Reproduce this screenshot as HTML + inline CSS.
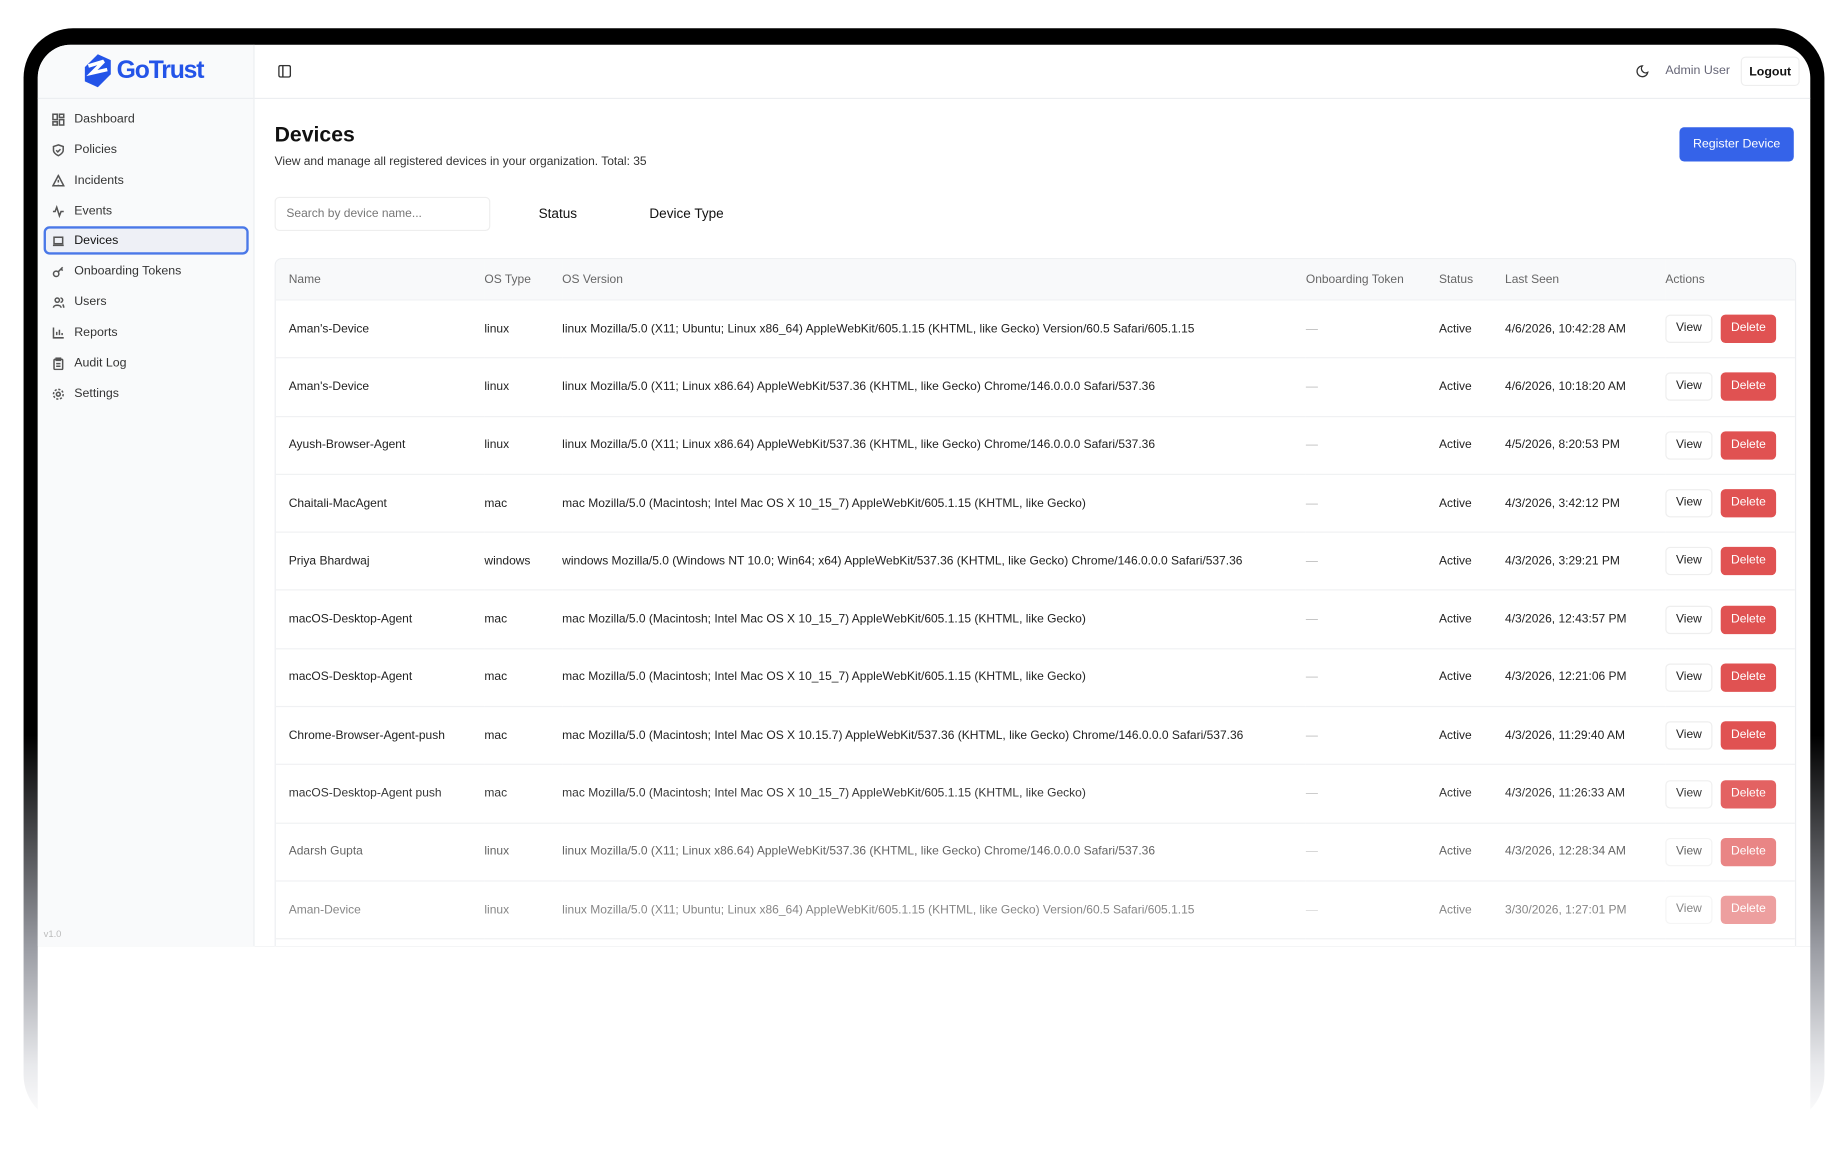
<!DOCTYPE html>
<html><head><meta charset="utf-8"><style>
html,body{margin:0;padding:0;width:1848px;height:1171px;overflow:hidden;background:#fff;font-family:"Liberation Sans",Arial,sans-serif}
#w{position:absolute;left:0;top:0;width:1568px;height:994px;transform:scale(1.17857);transform-origin:0 0}
.frame{position:absolute;left:20px;top:24px;width:1528px;height:930px;border-radius:42px;background:linear-gradient(#000 0,#000 600px,#9a9ca3 780px,#e8e9ec 880px,#fff 930px)}
.screen{position:absolute;left:32px;top:38px;width:1504px;height:765px;border-radius:28px 28px 0 0;background:#fff;overflow:hidden}
.below{position:absolute;left:32px;top:803px;width:1504px;height:191px;background:#fff}
.side{position:absolute;left:0;top:0;width:183px;height:765px;background:#f9fafb;border-right:1px solid #eceef1}
.logo{position:absolute;left:38px;top:5px;height:34px;display:flex;align-items:center;gap:3px;color:#2454e8;font-weight:bold;font-size:21px;letter-spacing:-1px}
.side .hr{position:absolute;left:0;right:0;top:45px;border-top:1px solid #eceef1}
.nav{position:absolute;left:5px;width:174px;height:24px;font-size:10.5px;color:#333;display:flex;align-items:center;box-sizing:border-box;padding-left:7px}
.nav svg{width:11px;height:11px;margin-right:8px;stroke:#555;fill:none;stroke-width:1.4}
.nav.act{border:2px solid #4a78e8;border-radius:5px;background:#eef0f6;padding-left:5px;color:#111}
.hdr{position:absolute;left:184px;right:0;top:0;height:45px;border-bottom:1px solid #eceef1}
.main{position:absolute;left:184px;top:46px;right:0;bottom:0}
table{border-collapse:collapse;width:1289px;font-size:10.2px}
th{font-weight:normal;color:#666;text-align:left;height:34px;background:#f8f9fa;padding:0}
td{height:48.3px;padding:0;color:#222;border-top:1px solid #f0f1f3;white-space:nowrap}
.btnv{display:inline-block;width:40px;height:24px;border:1px solid #eee;border-radius:4px;text-align:center;line-height:22px;color:#222;box-sizing:border-box;margin-right:7px;background:#fff}
.btnd{display:inline-block;width:47px;height:24px;border-radius:4px;text-align:center;line-height:24px;color:#fff;background:#e05252}
</style></head><body><div id="w">
<div class="frame"></div>
<div class="screen">
 <div class="side">
  <div class="logo"><svg width="26" height="30" viewBox="0 0 26 30"><path d="M13 1 L24 6 L24 18 L13 29 L2 24 L2 12 Z" fill="#2454e8"/><path d="M5 11 L18 7 L8 17 L21 14" stroke="#fff" stroke-width="3" fill="none"/></svg><span>GoTrust</span></div>
  <div class="hr"></div>
  <div class="nav" style="top:51px"><svg viewBox="0 0 12 12"><rect x="1" y="1" width="4" height="5"/><rect x="7" y="1" width="4" height="3"/><rect x="1" y="8" width="4" height="3"/><rect x="7" y="6" width="4" height="5"/></svg>Dashboard</div>
  <div class="nav" style="top:77px"><svg viewBox="0 0 12 12"><path d="M6 1 L10.5 2.5 V6 C10.5 9 6 11 6 11 C6 11 1.5 9 1.5 6 V2.5Z"/><path d="M4 6 L5.5 7.5 L8 5"/></svg>Policies</div>
  <div class="nav" style="top:103px"><svg viewBox="0 0 12 12"><path d="M6 1 L11 10.5 H1Z"/><path d="M6 5V7.5M6 9V9.2"/></svg>Incidents</div>
  <div class="nav" style="top:129px"><svg viewBox="0 0 12 12"><path d="M1 6H3L4.5 2L7 10L8.5 6H11"/></svg>Events</div>
  <div class="nav act" style="top:154px"><svg viewBox="0 0 12 12"><rect x="2" y="2.5" width="8" height="6"/><path d="M1 10H11"/></svg>Devices</div>
  <div class="nav" style="top:180px"><svg viewBox="0 0 12 12"><circle cx="4" cy="8" r="2.5"/><path d="M6 6L10 2M8.5 3.5L10 5"/></svg>Onboarding Tokens</div>
  <div class="nav" style="top:206px"><svg viewBox="0 0 12 12"><circle cx="5" cy="4" r="2"/><path d="M1.5 11C1.5 8 8.5 8 8.5 11M8 2A2 2 0 0 1 8 6M10 8C11 9 11 10 11 11"/></svg>Users</div>
  <div class="nav" style="top:232px"><svg viewBox="0 0 12 12"><path d="M1.5 1V10.5H11M4.5 8V5M7 8V3M9.5 8V6"/></svg>Reports</div>
  <div class="nav" style="top:258px"><svg viewBox="0 0 12 12"><rect x="2" y="2" width="8" height="9.5" rx="1"/><rect x="4" y="1" width="4" height="2"/><path d="M4 6H8M4 8.5H8"/></svg>Audit Log</div>
  <div class="nav" style="top:284px"><svg viewBox="0 0 12 12"><circle cx="6" cy="6" r="1.8"/><circle cx="6" cy="6" r="4.5" stroke-dasharray="2 1.5"/></svg>Settings</div>
  <div style="position:absolute;left:5px;top:750px;font-size:8px;color:#bbb">v1.0</div>
 </div>
 <div class="hdr">
  <svg style="position:absolute;left:20px;top:17px" width="11" height="11" viewBox="0 0 11 11" fill="none" stroke="#333" stroke-width="1.2"><rect x="0.6" y="0.6" width="9.8" height="9.8" rx="1.5"/><path d="M4 1V10"/></svg>
  <svg style="position:absolute;left:1172px;top:17px" width="11" height="11" viewBox="0 0 12 12" fill="none" stroke="#333" stroke-width="1.2"><path d="M6 1A5 5 0 1 0 11 7A4 4 0 0 1 6 1Z"/></svg>
  <div style="position:absolute;left:1197px;top:16px;font-size:10.5px;color:#667">Admin User</div>
  <div style="position:absolute;left:1261px;top:10px;width:50px;height:25px;border:1px solid #eee;border-radius:4px;font-size:10.5px;line-height:25px;text-align:center;box-sizing:border-box;color:#111;font-weight:bold">Logout</div>
 </div>
 <div class="main">
  <div style="position:absolute;left:17px;top:20px;font-size:18px;font-weight:bold;color:#111">Devices</div>
  <div style="position:absolute;left:17px;top:48px;font-size:10.2px;color:#333">View and manage all registered devices in your organization. Total: 35</div>
  <div style="position:absolute;left:1209px;top:24px;width:97px;height:29px;background:#3563e9;border-radius:4px;color:#fff;font-size:10.5px;line-height:29px;text-align:center">Register Device</div>
  <div style="position:absolute;left:17px;top:83px;width:183px;height:29px;border:1px solid #eee;border-radius:4px;box-sizing:border-box;font-size:10.2px;color:#777;line-height:27px;padding-left:9px">Search by device name...</div>
  <div style="position:absolute;left:241px;top:92px;font-size:11.5px;color:#111">Status</div>
  <div style="position:absolute;left:335px;top:92px;font-size:11.5px;color:#111">Device Type</div>
  <div style="position:absolute;left:17px;top:135px;border:1px solid #eceef1;border-radius:6px;overflow:hidden">
  <table>
   <colgroup><col style="width:177px"><col style="width:66px"><col style="width:631px"><col style="width:113px"><col style="width:56px"><col style="width:136px"><col></colgroup>
   <tr><th style="padding-left:11px">Name</th><th>OS Type</th><th>OS Version</th><th>Onboarding Token</th><th>Status</th><th>Last Seen</th><th>Actions</th></tr>
   <tr><td style="padding-left:11px">Aman's-Device</td><td>linux</td><td>linux Mozilla/5.0 (X11; Ubuntu; Linux x86_64) AppleWebKit/605.1.15 (KHTML, like Gecko) Version/60.5 Safari/605.1.15</td><td style="color:#bbb">—</td><td>Active</td><td>4/6/2026, 10:42:28 AM</td><td><span class="btnv">View</span><span class="btnd">Delete</span></td></tr>
   <tr><td style="padding-left:11px">Aman's-Device</td><td>linux</td><td>linux Mozilla/5.0 (X11; Linux x86.64) AppleWebKit/537.36 (KHTML, like Gecko) Chrome/146.0.0.0 Safari/537.36</td><td style="color:#bbb">—</td><td>Active</td><td>4/6/2026, 10:18:20 AM</td><td><span class="btnv">View</span><span class="btnd">Delete</span></td></tr>
   <tr><td style="padding-left:11px">Ayush-Browser-Agent</td><td>linux</td><td>linux Mozilla/5.0 (X11; Linux x86.64) AppleWebKit/537.36 (KHTML, like Gecko) Chrome/146.0.0.0 Safari/537.36</td><td style="color:#bbb">—</td><td>Active</td><td>4/5/2026, 8:20:53 PM</td><td><span class="btnv">View</span><span class="btnd">Delete</span></td></tr>
   <tr><td style="padding-left:11px">Chaitali-MacAgent</td><td>mac</td><td>mac Mozilla/5.0 (Macintosh; Intel Mac OS X 10_15_7) AppleWebKit/605.1.15 (KHTML, like Gecko)</td><td style="color:#bbb">—</td><td>Active</td><td>4/3/2026, 3:42:12 PM</td><td><span class="btnv">View</span><span class="btnd">Delete</span></td></tr>
   <tr><td style="padding-left:11px">Priya Bhardwaj</td><td>windows</td><td>windows Mozilla/5.0 (Windows NT 10.0; Win64; x64) AppleWebKit/537.36 (KHTML, like Gecko) Chrome/146.0.0.0 Safari/537.36</td><td style="color:#bbb">—</td><td>Active</td><td>4/3/2026, 3:29:21 PM</td><td><span class="btnv">View</span><span class="btnd">Delete</span></td></tr>
   <tr><td style="padding-left:11px">macOS-Desktop-Agent</td><td>mac</td><td>mac Mozilla/5.0 (Macintosh; Intel Mac OS X 10_15_7) AppleWebKit/605.1.15 (KHTML, like Gecko)</td><td style="color:#bbb">—</td><td>Active</td><td>4/3/2026, 12:43:57 PM</td><td><span class="btnv">View</span><span class="btnd">Delete</span></td></tr>
   <tr><td style="padding-left:11px">macOS-Desktop-Agent</td><td>mac</td><td>mac Mozilla/5.0 (Macintosh; Intel Mac OS X 10_15_7) AppleWebKit/605.1.15 (KHTML, like Gecko)</td><td style="color:#bbb">—</td><td>Active</td><td>4/3/2026, 12:21:06 PM</td><td><span class="btnv">View</span><span class="btnd">Delete</span></td></tr>
   <tr><td style="padding-left:11px">Chrome-Browser-Agent-push</td><td>mac</td><td>mac Mozilla/5.0 (Macintosh; Intel Mac OS X 10.15.7) AppleWebKit/537.36 (KHTML, like Gecko) Chrome/146.0.0.0 Safari/537.36</td><td style="color:#bbb">—</td><td>Active</td><td>4/3/2026, 11:29:40 AM</td><td><span class="btnv">View</span><span class="btnd">Delete</span></td></tr>
   <tr style="opacity:.9"><td style="padding-left:11px">macOS-Desktop-Agent push</td><td>mac</td><td>mac Mozilla/5.0 (Macintosh; Intel Mac OS X 10_15_7) AppleWebKit/605.1.15 (KHTML, like Gecko)</td><td style="color:#bbb">—</td><td>Active</td><td>4/3/2026, 11:26:33 AM</td><td><span class="btnv">View</span><span class="btnd">Delete</span></td></tr>
   <tr style="opacity:.7"><td style="padding-left:11px">Adarsh Gupta</td><td>linux</td><td>linux Mozilla/5.0 (X11; Linux x86.64) AppleWebKit/537.36 (KHTML, like Gecko) Chrome/146.0.0.0 Safari/537.36</td><td style="color:#bbb">—</td><td>Active</td><td>4/3/2026, 12:28:34 AM</td><td><span class="btnv">View</span><span class="btnd">Delete</span></td></tr>
   <tr style="opacity:.55"><td style="padding-left:11px">Aman-Device</td><td>linux</td><td>linux Mozilla/5.0 (X11; Ubuntu; Linux x86_64) AppleWebKit/605.1.15 (KHTML, like Gecko) Version/60.5 Safari/605.1.15</td><td style="color:#bbb">—</td><td>Active</td><td>3/30/2026, 1:27:01 PM</td><td><span class="btnv">View</span><span class="btnd">Delete</span></td></tr>
   <tr><td colspan="7"></td></tr>
  </table>
  </div>
 </div>
</div>
<div class="below"></div>
</div></body></html>
